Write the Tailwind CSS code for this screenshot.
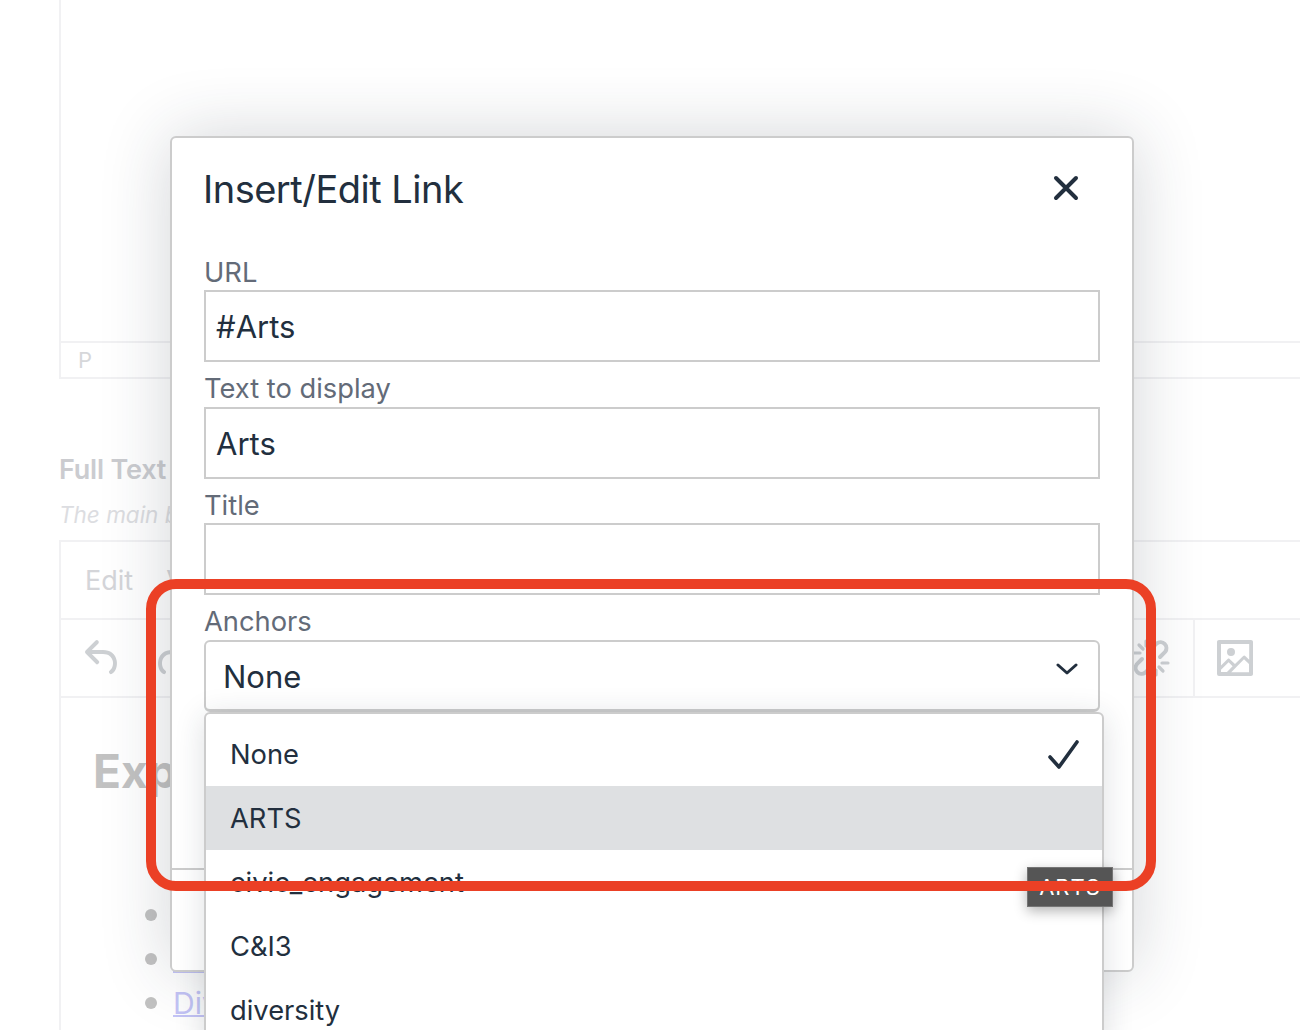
<!DOCTYPE html>
<html lang="en">
<head>
    <meta charset="UTF-8">
    <title>Insert/Edit Link</title>
    <script src="https://cdn.jsdelivr.net/npm/@tailwindcss/browser@4"></script>
</head>
<body class="bg-white font-['Inter','Liberation_Sans',sans-serif]">
<div class="relative w-[1300px] h-[1030px] overflow-hidden bg-white">

    <!-- Faded editor behind the dialog -->
    <div class="ml-[59px] w-[1270px]">
        <div class="h-[379px] border-2 border-t-0 border-[#f1f1f3] flex flex-col justify-end">
            <div class="h-[36px] border-t-2 border-[#f1f1f3] pl-[17px] flex items-center text-[22px] text-[#d6d7da]">P</div>
        </div>
        <h3 class="mt-[73px] text-[27px] leading-[36px] font-semibold text-[#cbccd0] tracking-[-0.2px]">Full Text</h3>
        <p class="mt-[10px] text-[22.5px] leading-[34px] italic text-[#dcdde1]">The main body</p>
        <div class="mt-[8px] border-2 border-[#f1f1f3] h-[600px]">
            <div class="h-[78px] border-b-2 border-[#f1f1f3] flex items-center pl-[24px] pt-[2px] gap-[33px] text-[27px] text-[#d4d5d9]">
                <span>Edit</span>
                <span>View</span>
            </div>
            <div class="h-[78px] border-b-2 border-[#f1f1f3] flex items-center pl-[18px]">
                <svg class="w-[48px] h-[48px] fill-[#cdd0d3]" viewBox="0 0 24 24"><path d="M6.4 8H12c3.7 0 6.2 2 6.8 5.1.6 2.7-.4 5.6-2.3 6.8a1 1 0 0 1-1-1.8c1.1-.6 1.8-2.7 1.4-4.6-.5-2.1-2.1-3.5-4.9-3.5H6.4l3.3 3.3a1 1 0 1 1-1.4 1.4l-5-5a1 1 0 0 1 0-1.4l5-5a1 1 0 0 1 1.4 1.4L6.4 8Z"/></svg>
                <svg class="w-[48px] h-[48px] ml-[21px] fill-[#cdd0d3] -scale-x-100" viewBox="0 0 24 24"><path d="M6.4 8H12c3.7 0 6.2 2 6.8 5.1.6 2.7-.4 5.6-2.3 6.8a1 1 0 0 1-1-1.8c1.1-.6 1.8-2.7 1.4-4.6-.5-2.1-2.1-3.5-4.9-3.5H6.4l3.3 3.3a1 1 0 1 1-1.4 1.4l-5-5a1 1 0 0 1 0-1.4l5-5a1 1 0 0 1 1.4 1.4L6.4 8Z"/></svg>
                <svg class="w-[48px] h-[48px] ml-[931px] shrink-0 stroke-[#cdd0d3]" viewBox="0 0 24 24" fill="none" stroke-width="2" stroke-linecap="round">
                    <path d="M7.5 12.5l-2.6 2.6a3 3 0 0 0 4.2 4.2l2.4-2.4M16.5 11.5l2.6-2.6a3 3 0 0 0-4.2-4.2l-2.4 2.4"/>
                    <path stroke-width="1.6" d="M16 16.5l2 2M17.5 14.5h3M14.5 18v2.5M8 7.5l-2-2M6.5 9.5h-3M9.5 6V3.5"/>
                </svg>
                <div class="ml-[18px] w-[2px] h-full shrink-0 bg-[#f1f1f3]"></div>
                <svg class="w-[48px] h-[48px] ml-[16px] shrink-0 fill-[#cdd0d3]" viewBox="0 0 24 24"><path d="m5 15.7 3.3-3.2c.3-.3.7-.3 1 0L12 15l4.1-4c.3-.4.8-.4 1 0l2 1.9V5H5v10.7ZM5 18v1h3l2.8-2.9-2-2L5 17.9Zm14-3-2.5-2.4-6.4 6.5H19v-4ZM4 3h16c.6 0 1 .4 1 1v16c0 .6-.4 1-1 1H4a1 1 0 0 1-1-1V4c0-.6.4-1 1-1Zm6 8a2 2 0 1 0 0-4 2 2 0 0 0 0 4Z"/></svg>
            </div>
            <div class="pl-[32px] pt-[43px]">
                <h1 class="text-[46px] leading-[60px] font-bold text-[#c2c2c2]">Explore</h1>
                <ul class="mt-[91.5px] text-[30px] leading-[44px] text-[#c5c5f7]">
                    <li class="flex items-center h-[44px]"><span class="w-[12px] h-[12px] ml-[52px] mr-[16px] rounded-full bg-[#c2c2c2]"></span><a class="underline decoration-2">Arts</a></li>
                    <li class="flex items-center h-[44px]"><span class="w-[12px] h-[12px] ml-[52px] mr-[16px] rounded-full bg-[#c2c2c2]"></span><a class="underline decoration-2">Community</a></li>
                    <li class="flex items-center h-[44px]"><span class="w-[12px] h-[12px] ml-[52px] mr-[16px] rounded-full bg-[#c2c2c2]"></span><a class="underline decoration-2">Diversity</a></li>
                </ul>
            </div>
        </div>
    </div>

    <!-- Dialog -->
    <div class="absolute left-[170px] top-[136px] w-[964px] h-[836px] flex flex-col bg-white border-2 border-[#cccccc] rounded-[6px] shadow-[0_0_70px_rgba(34,47,62,0.2)]">
        <div class="h-[105.33px] px-[32px] flex items-center justify-between">
            <h2 class="text-[38px] tracking-[-0.5px] text-[#222f3e] mt-[-2px] ml-[-1px]">Insert/Edit Link</h2>
            <svg class="w-[48px] h-[48px] mr-[10px] mt-[-6px] stroke-[#222f3e]" viewBox="0 0 48 48" fill="none" stroke-width="4" stroke-linecap="round"><path d="M14 14l20 20M34 14L14 34"/></svg>
        </div>
        <div class="px-[32px] text-[#222f3e]">
            <label class="block h-[46.67px] pt-[12px] text-[27.3px] leading-[36px] text-[#636b78]">URL</label>
            <input class="block w-full h-[72px] pl-[10px] pt-[2px] border-2 border-[#cccccc] text-[31px]" value="#Arts">
            <label class="block h-[44.67px] pt-[9px] text-[27.3px] leading-[36px] text-[#636b78]">Text to display</label>
            <input class="block w-full h-[72px] pl-[10px] pt-[2px] border-2 border-[#cccccc] text-[31px]" value="Arts">
            <label class="block h-[44.67px] pt-[9px] text-[27.3px] leading-[36px] text-[#636b78]">Title</label>
            <input class="block w-full h-[72px] pl-[10px] pt-[2px] border-2 border-[#cccccc] text-[31px]" value="">
            <label class="block h-[44.67px] pt-[9px] text-[27.3px] leading-[36px] text-[#636b78]">Anchors</label>
            <div class="h-[72px] pl-[17px] pr-[20px] flex items-center justify-between border-2 border-b-[3px] border-[#cccccc] rounded-[6px] text-[31px]">
                <span class="mt-[3px]">None</span>
                <svg class="w-[22px] h-[14px] mt-[-12px] stroke-[#222f3e]" viewBox="0 0 22 14" fill="none" stroke-width="3" stroke-linecap="round" stroke-linejoin="round"><path d="M2 3l9 8 9-8"/></svg>
            </div>
        </div>
        <div class="mt-auto h-[102px] border-t-2 border-[#cccccc]"></div>
    </div>

    <!-- Anchors dropdown -->
    <div class="absolute left-[204px] top-[712px] w-[900px] h-[340px] pt-[8px] bg-white border-2 border-[#cccccc] rounded-[6px] shadow-[0_4px_30px_rgba(34,47,62,0.15)] text-[27.3px] text-[#222f3e]">
        <div class="h-[64px] pl-[24px] pr-[23px] pt-[2px] flex items-center justify-between">
            <span>None</span>
            <svg class="w-[32px] h-[30px] stroke-[#222f3e]" viewBox="0 0 32 30" fill="none" stroke-width="3.6" stroke-linecap="round" stroke-linejoin="round"><path d="M3 17l9 10L30 2"/></svg>
        </div>
        <div class="h-[64px] pl-[24px] pt-[2px] flex items-center bg-[#dee0e2]">ARTS</div>
        <div class="h-[64px] pl-[24px] pt-[2px] flex items-center">civic_engagement</div>
        <div class="h-[64px] pl-[24px] pt-[2px] flex items-center">C&amp;I3</div>
        <div class="h-[64px] pl-[24px] pt-[2px] flex items-center">diversity</div>
    </div>

    <!-- Tooltip -->
    <div class="absolute left-[1027px] top-[867px] w-[86px] h-[40px] flex items-center justify-center bg-[#555555] border border-[#757575] shadow-[0_4px_12px_rgba(0,0,0,0.3)] text-[22px] tracking-[1px] text-white">ARTS</div>

    <!-- Red highlight -->
    <div class="absolute left-[146px] top-[579px] w-[1010px] h-[312px] border-[10px] border-[#eb4025] rounded-[30px]"></div>
</div>
</body>
</html>
